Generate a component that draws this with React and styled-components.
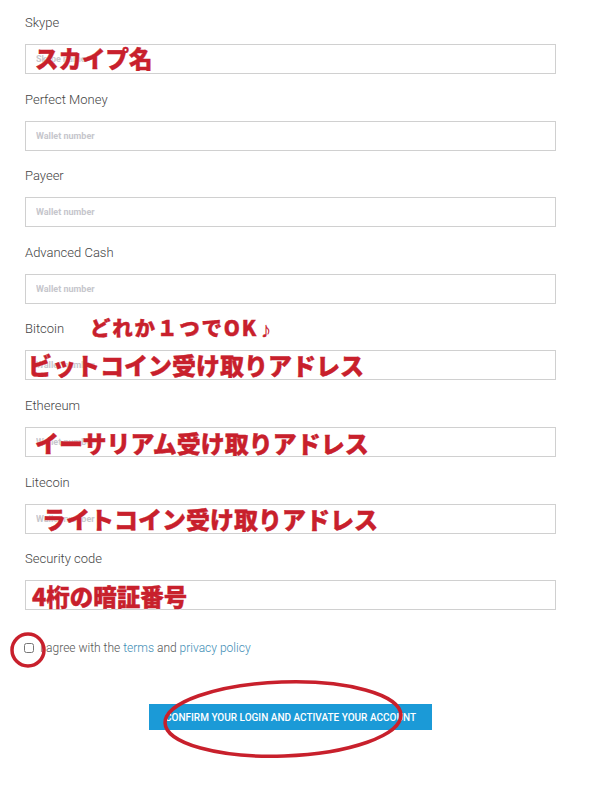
import React from 'react';
import styled, { createGlobalStyle } from 'styled-components';

const GlobalStyle = createGlobalStyle`
  body {
    margin: 0;
    background: #fff;
    font-family: Roboto, "Liberation Sans", sans-serif;
  }
`;

const Page = styled.div`
  position: relative;
  width: 595px;
  height: 787px;
  overflow: hidden;
`;

const Form = styled.form`
  width: 531px;
  padding: 16px 0 0 25px;
`;

const Field = styled.div`
  position: relative;
  margin-bottom: 18.6px;
`;

const LabelRow = styled.div`
  display: flex;
  align-items: center;
  height: 14px;
  margin-bottom: 14px;
`;

const Label = styled.label`
  font-size: 13px;
  font-weight: 300;
  color: #444;
  line-height: 14px;
`;

const InputBox = styled.div`
  position: relative;
  height: 30px;
  box-sizing: border-box;
  border: 1px solid #d0d0d0;
  background: #fff;
`;

const Input = styled.input`
  width: 100%;
  height: 100%;
  box-sizing: border-box;
  border: none;
  outline: none;
  padding: 0 10px;
  background: transparent;
  font-family: Roboto, "Liberation Sans", sans-serif;
  font-size: 9px;
  font-weight: 700;
  &::placeholder {
    color: #c6c6cc;
  }
`;

const Note = styled.span`
  position: absolute;
  left: ${p => p.left}px;
  top: ${p => p.top}px;
  font-family: "Noto Sans CJK JP", sans-serif;
  font-weight: 900;
  font-size: ${p => p.size}px;
  line-height: 1;
  color: #c8202c;
  white-space: nowrap;
  letter-spacing: ${p => p.spacing || 0}px;
  text-shadow: 0 0 2px #fff, 0 0 2px #fff;
  -webkit-text-stroke: 0.4px #c8202c;
  pointer-events: none;
`;

const Tune = styled.small`
  font-size: 12px;
  font-weight: 400;
  margin-left: 2px;
`;

const AgreeRow = styled.div`
  display: flex;
  align-items: center;
  gap: 6px;
  margin-top: 31px;
  font-size: 12px;
  font-weight: 300;
  color: #555;
`;

const Check = styled.input`
  width: 10px;
  height: 10px;
  margin: 0 0 0 -1px;
  accent-color: #999;
`;

const Link = styled.a`
  color: #3d8db5;
  text-decoration: none;
`;

const ButtonRow = styled.div`
  display: flex;
  justify-content: center;
  margin-top: 49px;
`;

const Button = styled.button`
  width: 283px;
  height: 26px;
  border: none;
  background: #1b9ad7;
  color: #fff;
  font-family: Roboto, "Liberation Sans", sans-serif;
  font-weight: 500;
  font-size: 10px;
  text-transform: uppercase;
  padding: 0;
`;

const Marks = styled.svg`
  position: absolute;
  left: 0;
  top: 0;
  pointer-events: none;
`;

const fields = [
  { label: 'Skype', placeholder: 'Skype name', note: 'スカイプ名', left: 9, size: 23.5, top: 2 },
  { label: 'Perfect Money', placeholder: 'Wallet number' },
  { label: 'Payeer', placeholder: 'Wallet number' },
  { label: 'Advanced Cash', placeholder: 'Wallet number' },
  { label: 'Bitcoin', placeholder: 'Wallet number', note: 'ビットコイン受け取りアドレス', left: 2, size: 24, top: 2, side: 'どれか１つでOK' },
  { label: 'Ethereum', placeholder: 'Wallet number', note: 'イーサリアム受け取りアドレス', left: 9, size: 24, top: 3 },
  { label: 'Litecoin', placeholder: 'Wallet number', note: 'ライトコイン受け取りアドレス', left: 16, size: 24, top: 2 },
  { label: 'Security code', placeholder: '', note: '4桁の暗証番号', left: 6, size: 23.5, top: 4 },
];

function App() {
  return (
    <Page>
      <GlobalStyle />
      <Form onSubmit={e => e.preventDefault()}>
        {fields.map(f => (
          <Field key={f.label}>
            <LabelRow>
              <Label>{f.label}</Label>
              {f.side && (
                <Note left={65} top={-5} size={20.5} spacing={1.8}>
                  {f.side}<Tune>♪</Tune>
                </Note>
              )}
            </LabelRow>
            <InputBox>
              <Input placeholder={f.placeholder} />
              {f.note && (
                <Note left={f.left} top={f.top} size={f.size}>{f.note}</Note>
              )}
            </InputBox>
          </Field>
        ))}
        <AgreeRow>
          <Check type="checkbox" />
          <span>
            I agree with the <Link href="#">terms</Link> and <Link href="#">privacy policy</Link>
          </span>
        </AgreeRow>
        <ButtonRow>
          <Button type="submit">Confirm your login and activate your account</Button>
        </ButtonRow>
      </Form>
      <Marks width="595" height="787" viewBox="0 0 595 787">
        <circle cx="28" cy="650" r="16" fill="none" stroke="#c8202c" strokeWidth="3.5" />
        <ellipse cx="283" cy="719" rx="118" ry="37" fill="none" stroke="#c8202c" strokeWidth="3.5" transform="rotate(-2 283 719)" />
      </Marks>
    </Page>
  );
}

export default App;
